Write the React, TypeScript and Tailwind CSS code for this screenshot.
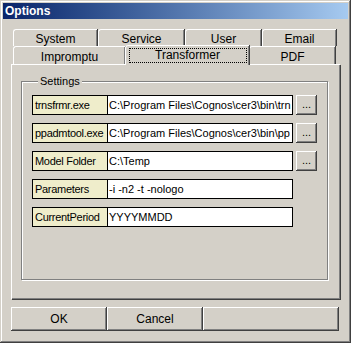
const raised = "shadow-[inset_-1px_-1px_#404040,inset_1px_1px_#ffffff,inset_-2px_-2px_#808080]"

const Tab = ({ label, w }: { label: string; w: string }) => (
  <div className={`${w} h-full flex items-center justify-center border-t border-l border-white rounded-tl-[3px] shadow-[inset_-1px_0_#808080,1px_0_#404040] mr-[1px]`}>
    <span className="pt-[2px]">{label}</span>
  </div>
)

// visible part of the paths only, the fields are too narrow for the rest
const rows = [
  { label: "trnsfrmr.exe", value: "C:\\Program Files\\Cognos\\cer3\\bin\\trn", browse: true },
  { label: "ppadmtool.exe", value: "C:\\Program Files\\Cognos\\cer3\\bin\\pp", browse: true },
  { label: "Model Folder", value: "C:\\Temp", browse: true },
  { label: "Parameters", value: "-i -n2 -t -nologo", browse: false },
  { label: "CurrentPeriod", value: "YYYYMMDD", browse: false },
]

export default function App() {
  return (
    <div
      className="w-[351px] h-[343px] bg-[#d4d0c8] p-[3px] flex flex-col text-[11px] text-black shadow-[inset_-1px_-1px_#404040,inset_1px_1px_#d4d0c8,inset_-2px_-2px_#808080,inset_2px_2px_#ffffff]"
      style={{ fontFamily: '"Liberation Sans", Arial, sans-serif' }}
    >
      {/* title bar */}
      <div className="h-[16px] flex items-center px-[2px] bg-gradient-to-r from-[#0a246a] to-[#a6caf0]">
        <span className="text-white font-bold text-[12px] leading-none">Options</span>
      </div>

      <div className="flex flex-col px-[8px] pt-[10px]">
        {/* tabs */}
        <div className="flex flex-col px-[2px]">
          <div className="flex h-[17px] text-[12px]">
            <Tab label="System" w="w-[84px]" />
            <Tab label="Service" w="w-[86px]" />
            <Tab label="User" w="w-[76px]" />
            <Tab label="Email" w="w-[74px]" />
          </div>
          <div className="flex h-[18px] items-end text-[12px]">
            <Tab label="Impromptu" w="w-[112px]" />
            <div className="relative z-10 w-[124px] h-[20px] -mb-[1px] -ml-[1px] bg-[#d4d0c8] flex items-center justify-center border-t border-l border-white rounded-tl-[3px] shadow-[inset_-1px_0_#808080,1px_0_#404040]">
              <span className="w-[118px] h-[15px] mb-[1px] border border-dotted border-black flex items-center justify-center leading-none">Transformer</span>
            </div>
            <Tab label="PDF" w="w-[86px]" />
          </div>
        </div>

        {/* tab panel */}
        <div className="w-[329px] h-[235px] flex flex-col border-t border-l border-white shadow-[inset_-1px_-1px_#808080,1px_1px_#404040] px-[9px] pt-[10px]">
          <fieldset className="w-[307px] h-[205px] border border-[#808080] shadow-[inset_1px_1px_#ffffff,1px_1px_#ffffff] px-[10px] pt-[7px]">
            <legend className="ml-[6px] px-[2px] bg-[#d4d0c8] leading-[13px]">Settings</legend>
            <div className="flex flex-col gap-[8px]">
              {rows.map(r => (
                <div key={r.label} className="flex items-center h-[20px]">
                  <div className="flex h-[20px] border border-black">
                    <div className="w-[75px] bg-[#efedcb] border-r border-black flex items-center pl-[2px] tracking-[-0.3px] whitespace-nowrap overflow-hidden">
                      {r.label}
                    </div>
                    <div className="w-[184px] bg-white flex items-center pl-[1px] whitespace-nowrap overflow-hidden">
                      {r.value}
                    </div>
                  </div>
                  {r.browse && (
                    <div className={`ml-[3px] w-[21px] h-[20px] flex items-end justify-center pb-[5px] leading-none ${raised}`}>
                      ...
                    </div>
                  )}
                </div>
              ))}
            </div>
          </fieldset>
        </div>

        {/* buttons */}
        <div className="flex h-[24px] mt-[8px] w-[328px] text-[12px]">
          <div className={`w-[96px] flex items-center justify-center ${raised}`}>OK</div>
          <div className={`w-[96px] flex items-center justify-center ${raised}`}>Cancel</div>
          <div className={`flex-1 ${raised}`}></div>
        </div>
      </div>
    </div>
  )
}
